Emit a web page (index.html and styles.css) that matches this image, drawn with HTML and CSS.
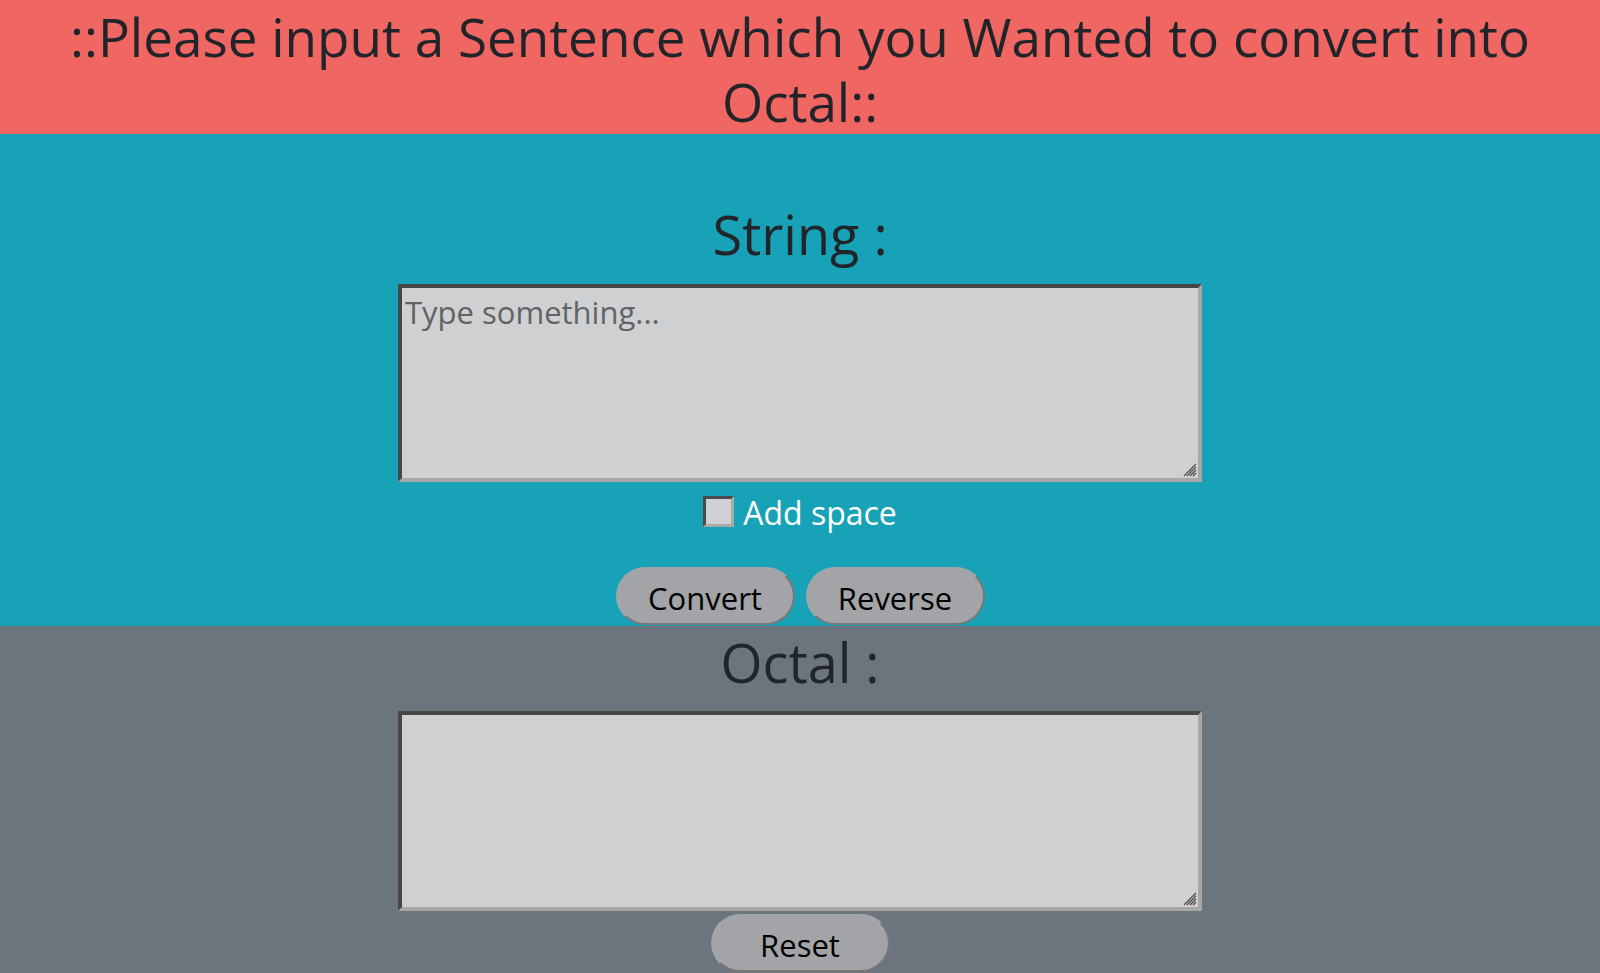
FILE: index.html
```html
<!DOCTYPE html>
<html lang="en">
<head>
<meta charset="utf-8">
<title>String to Octal</title>
<link rel="stylesheet" href="styles.css">
</head>
<body>
<header class="banner">
  <h1 class="banner-title">::Please input a Sentence which you Wanted to convert into Octal::</h1>
</header>
<section class="panel panel-input">
  <h2 class="panel-title">String :</h2>
  <div class="box-wrap">
    <textarea class="box" placeholder="Type something..."></textarea>
    <svg class="grip" width="14" height="14" viewBox="0 0 14 14" aria-hidden="true">
      <path d="M1 13 L13 1 M4 13 L13 4 M7 13 L13 7 M10 13 L13 10" stroke="#4a4a4a" stroke-width="1.2" fill="none"/>
    </svg>
  </div>
  <div class="check-row">
    <input type="checkbox" id="addspace" class="check">
    <label for="addspace" class="check-label">Add space</label>
  </div>
  <div class="btn-row">
    <button class="btn">Convert</button>
    <button class="btn">Reverse</button>
  </div>
</section>
<section class="panel panel-output">
  <h2 class="panel-title">Octal :</h2>
  <div class="box-wrap box-wrap-out">
    <textarea class="box box-out"></textarea>
    <svg class="grip" width="14" height="14" viewBox="0 0 14 14" aria-hidden="true">
      <path d="M1 13 L13 1 M4 13 L13 4 M7 13 L13 7 M10 13 L13 10" stroke="#4a4a4a" stroke-width="1.2" fill="none"/>
    </svg>
  </div>
  <div class="btn-row btn-row-reset">
    <button class="btn">Reset</button>
  </div>
</section>
</body>
</html>
```
FILE: styles.css
```css
html, body {
  margin: 0;
  padding: 0;
}
body {
  font-family: "Open Sans", "Noto Sans", sans-serif;
  background: #6c757d;
  color: #212529;
}
.banner {
  background: #ef6662;
  text-align: center;
  padding: 4px 20px 0;
  height: 134px;
  box-sizing: border-box;
}
.banner-title {
  margin: 0;
  font-size: 53px;
  font-weight: 400;
  line-height: 65px;
  color: #212529;
}
.panel {
  display: flex;
  flex-direction: column;
  align-items: center;
}
.panel-input {
  background: #17a2b8;
  padding: 64px 0 1px;
}
.panel-output {
  background: #6c757d;
}
.panel-title {
  margin: 0;
  font-size: 54px;
  font-weight: 400;
  line-height: 73px;
  color: #212529;
}
.box-wrap {
  position: relative;
  margin-top: 13px;
  line-height: 0;
}
.box-wrap-out {
  margin-top: 12px;
}
.box {
  box-sizing: border-box;
  display: block;
  width: 804px;
  height: 198px;
  margin: 0;
  padding: 3px 3px;
  background: #cfd0d2;
  border: 4px solid;
  border-color: #464646 #a7a7a7 #a7a7a7 #464646;
  font-family: "Open Sans", "Noto Sans", sans-serif;
  font-size: 31px;
  line-height: normal;
  color: #212529;
  outline: none;
  resize: none;
}
.box::placeholder {
  color: #626365;
}
.box-out {
  height: 200px;
}
.grip {
  position: absolute;
  right: 5px;
  bottom: 5px;
  pointer-events: none;
}
.check-row {
  display: flex;
  align-items: flex-start;
  gap: 9px;
  margin-top: 14px;
}
.check {
  appearance: none;
  -webkit-appearance: none;
  box-sizing: border-box;
  width: 31px;
  height: 31px;
  margin: 0;
  background: #cfd0d2;
  border: 3px solid;
  border-color: #4a4a4a #a9a9a9 #a9a9a9 #4a4a4a;
}
.check-label {
  font-size: 32px;
  line-height: 34px;
  color: #ffffff;
}
.btn-row {
  display: flex;
  gap: 11px;
  margin-top: 37px;
}
.btn-row-reset {
  margin-top: 3px;
}
.btn {
  box-sizing: border-box;
  width: 179px;
  height: 58px;
  padding: 3px 0 0;
  border: 2px solid;
  border-color: #a4a5a8 #76787b #76787b #a4a5a8;
  border-radius: 30px;
  background: #a3a4a7;
  font-family: "Open Sans", "Noto Sans", sans-serif;
  font-size: 31px;
  color: #000000;
}
```
